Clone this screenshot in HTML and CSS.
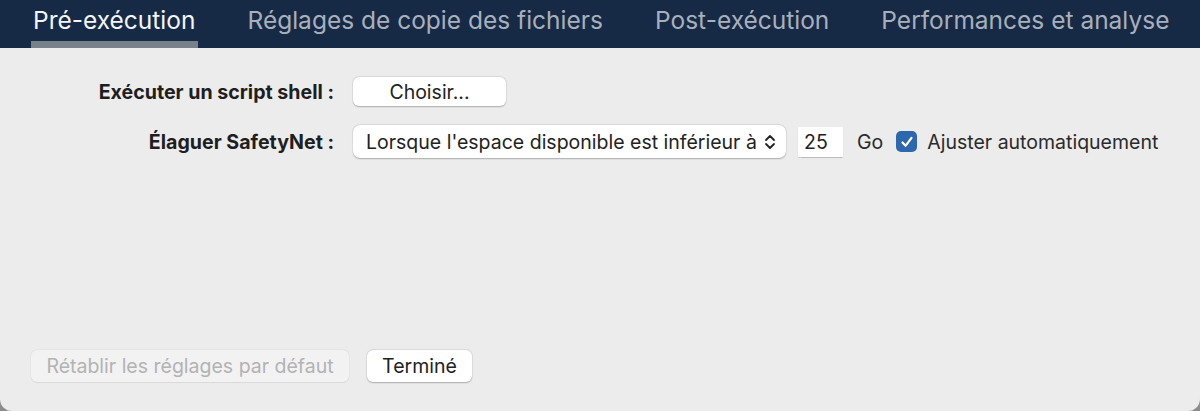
FILE: index.html
```html
<!DOCTYPE html>
<html lang="fr">
<head>
<meta charset="utf-8">
<link rel="stylesheet" href="styles.css">
</head>
<body>
<div class="window">
  <nav class="tabs">
    <div class="tab active">Pré-exécution</div>
    <div class="tab">Réglages de copie des fichiers</div>
    <div class="tab">Post-exécution</div>
    <div class="tab">Performances et analyse</div>
  </nav>
  <main class="panel">
    <div class="form">
      <div class="label">Exécuter un script shell :</div>
      <div class="controls"><button class="btn choose">Choisir...</button></div>
      <div class="label">Élaguer SafetyNet :</div>
      <div class="controls">
        <div class="select">
          <span>Lorsque l'espace disponible est inférieur à</span>
          <svg class="chev" width="12" height="16" viewBox="0 0 12 16"><path d="M2 6 L6 2 L10 6 M2 10 L6 14 L10 10" fill="none" stroke="#222" stroke-width="1.8" stroke-linecap="round" stroke-linejoin="round"/></svg>
        </div>
        <div class="num">25</div>
        <span class="unit">Go</span>
        <span class="check"><svg width="14" height="14" viewBox="0 0 14 14"><path d="M2.5 7.5 L5.6 10.8 L11.5 2.8" fill="none" stroke="#fff" stroke-width="2.2" stroke-linecap="round" stroke-linejoin="round"/></svg></span>
        <span class="checklabel">Ajuster automatiquement</span>
      </div>
    </div>
    <div class="footer">
      <button class="btn disabled">Rétablir les réglages par défaut</button>
      <button class="btn done">Terminé</button>
    </div>
  </main>
</div>
</body>
</html>
```
FILE: styles.css
```css
html, body {
  margin: 0;
  padding: 0;
}
body {
  background: #8c8c8c;
  font-family: Inter, "Liberation Sans", sans-serif;
  width: 1200px;
  height: 411px;
  overflow: hidden;
}
.window {
  display: flex;
  flex-direction: column;
  height: 411px;
}
.tabs {
  background: #172a45;
  height: 48px;
  display: flex;
  padding-left: 31px;
  gap: 47px;
  box-sizing: border-box;
}
.tab {
  color: #a8b0bc;
  font-size: 24.5px;
  line-height: 40px;
  height: 48px;
  box-sizing: border-box;
  padding: 0 3px 0 2px;
  white-space: nowrap;
}
.tab.active {
  color: #f4f5f7;
  border-bottom: 7px solid #788089;
}
.panel {
  flex: 1;
  background: #ececec;
  border-radius: 0 0 12px 12px;
  display: flex;
  flex-direction: column;
  padding: 29px 0 29px 31px;
}
.form {
  display: grid;
  grid-template-columns: 303px auto;
  column-gap: 19px;
  row-gap: 19px;
  align-items: center;
}
.label {
  text-align: right;
  font-weight: 700;
  font-size: 19.6px;
  color: #1e1e1e;
  white-space: nowrap;
}
.controls {
  display: flex;
  align-items: center;
}
.btn {
  font-family: Inter, "Liberation Sans", sans-serif;
  font-size: 19.5px;
  color: #222;
  background: #fff;
  border: none;
  border-radius: 6px;
  box-shadow: 0 0.5px 1.5px rgba(0,0,0,0.25), 0 0 0 0.5px rgba(0,0,0,0.06);
  padding: 0;
}
.choose {
  width: 153px;
  height: 29px;
}
.select {
  width: 433px;
  height: 33px;
  background: #fff;
  border-radius: 7px;
  box-shadow: 0 0.5px 1.5px rgba(0,0,0,0.25), 0 0 0 0.5px rgba(0,0,0,0.06);
  display: flex;
  align-items: center;
  justify-content: space-between;
  padding: 0 10px 0 13px;
  box-sizing: border-box;
  font-size: 19.5px;
  color: #222;
  white-space: nowrap;
}
.num {
  margin-left: 12px;
  width: 45px;
  height: 30px;
  background: #fff;
  box-shadow: 0 0.5px 1px rgba(0,0,0,0.2);
  font-size: 19.5px;
  color: #222;
  line-height: 30px;
  padding-left: 6px;
  box-sizing: border-box;
}
.unit {
  margin-left: 14px;
  font-size: 19.5px;
  color: #2a2a2a;
}
.check {
  margin-left: 13px;
  width: 21px;
  height: 21px;
  border-radius: 5px;
  background: #2d67ac;
  display: flex;
  align-items: center;
  justify-content: center;
}
.checklabel {
  margin-left: 10px;
  font-size: 19.5px;
  color: #2a2a2a;
  white-space: nowrap;
}
.footer {
  margin-top: auto;
  display: flex;
  gap: 18px;
}
.disabled {
  width: 318px;
  height: 32px;
  background: #f2f2f2;
  color: #b3b3b3;
  box-shadow: 0 0 0 0.5px rgba(0,0,0,0.05), 0 0.5px 1px rgba(0,0,0,0.06);
}
.done {
  width: 105px;
  height: 32px;
}
```
